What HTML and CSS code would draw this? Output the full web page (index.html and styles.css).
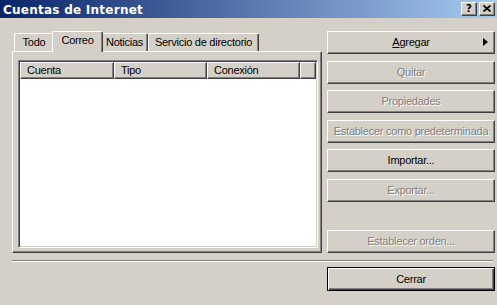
FILE: index.html
```html
<!DOCTYPE html>
<html lang="es">
<head>
<meta charset="utf-8">
<title>Cuentas de Internet</title>
<link rel="stylesheet" href="styles.css">
</head>
<body>
<div class="window">
  <div class="titlebar">
    <span class="title">Cuentas de Internet</span>
    <div class="caption-btns">
      <span class="cap-btn help">?</span>
      <span class="cap-btn close">
        <svg width="8" height="7" viewBox="0 0 8 7"><path d="M0.5 0.5 L7.5 6.5 M7.5 0.5 L0.5 6.5" stroke="#000" stroke-width="1.7" fill="none"/></svg>
      </span>
    </div>
  </div>
  <div class="client">
    <div class="main">
      <div class="tabarea">
        <div class="tabstrip">
          <div class="tab t-todo">Todo</div>
          <div class="tab sel t-correo">Correo</div>
          <div class="tab t-noticias">Noticias</div>
          <div class="tab t-servicio">Servicio de directorio</div>
        </div>
        <div class="panel">
          <div class="listview">
            <div class="lv-header">
              <div class="col c1">Cuenta</div>
              <div class="col c2">Tipo</div>
              <div class="col c3">Conexión</div>
              <div class="col c4"></div>
            </div>
          </div>
        </div>
      </div>
      <div class="buttons">
        <div class="btn menu"><span></span><span class="label"><u>A</u>gregar</span><span class="arrow"></span></div>
        <div class="btn disabled">Quitar</div>
        <div class="btn disabled">Propiedades</div>
        <div class="btn disabled">Establecer como predeterminada</div>
        <div class="btn">Importar...</div>
        <div class="btn disabled">Exportar...</div>
        <div class="btn disabled order">Establecer orden...</div>
      </div>
    </div>
    <div class="separator"></div>
    <div class="footer">
      <div class="btn default">Cerrar</div>
    </div>
  </div>
</div>
</body>
</html>
```
FILE: styles.css
```css
* { box-sizing: border-box; }

html, body {
  margin: 0;
  padding: 0;
}

body {
  width: 497px;
  height: 305px;
  overflow: hidden;
  background: #d4d0c8;
  font-family: "Liberation Sans", Arial, sans-serif;
  font-size: 11px;
  letter-spacing: -0.25px;
  color: #000;
}

.window {
  width: 497px;
  height: 305px;
  background: #d4d0c8;
}

/* ---------- title bar ---------- */
.titlebar {
  height: 18px;
  display: flex;
  justify-content: space-between;
  align-items: flex-start;
  background: linear-gradient(to right, #0a246a, #a6caf0);
  padding-right: 2px;
}

.title {
  font-family: "DejaVu Sans", Verdana, sans-serif;
  font-weight: bold;
  font-size: 12px;
  line-height: 18px;
  padding-top: 1px;
  padding-left: 3px;
  color: #fff;
  letter-spacing: 0.25px;
  white-space: nowrap;
}

.caption-btns {
  display: flex;
  gap: 2px;
  margin-top: 2px;
}

.cap-btn {
  width: 16px;
  height: 14px;
  background: #d4d0c8;
  border-top: 1px solid #fff;
  border-left: 1px solid #fff;
  border-right: 1px solid #404040;
  border-bottom: 1px solid #404040;
  box-shadow: inset -1px -1px 0 #808080;
  display: flex;
  align-items: center;
  justify-content: center;
}

.cap-btn.help {
  font-family: "DejaVu Sans", Verdana, sans-serif;
  font-weight: bold;
  font-size: 10px;
  letter-spacing: 0;
  line-height: 1;
  padding-bottom: 1px;
}

.cap-btn svg {
  display: block;
  margin-top: -1px;
}

/* ---------- client ---------- */
.client {
  padding: 13px 2px 0 12px;
}

.main {
  display: flex;
  gap: 5px;
}

.tabarea {
  width: 310px;
  display: flex;
  flex-direction: column;
}

.tabstrip {
  height: 20px;
  display: flex;
  align-items: flex-end;
  padding-left: 2px;
}

.tab {
  height: 18px;
  background: #d4d0c8;
  border-top: 1px solid #fff;
  border-left: 1px solid #fff;
  border-right: 1px solid #404040;
  box-shadow: inset -1px 0 0 #808080;
  border-radius: 2px 2px 0 0;
  display: flex;
  align-items: center;
  justify-content: center;
  padding-bottom: 1px;
  white-space: nowrap;
}

.t-todo { width: 40px; }
.t-correo { width: 51px; }
.t-noticias { width: 47px; }
.t-servicio { width: 111px; }

.tab.sel {
  height: 21px;
  margin: 0 -2px -1px;
  position: relative;
  z-index: 2;
  padding-bottom: 4px;
}

.panel {
  height: 202px;
  border-top: 1px solid #fff;
  border-left: 1px solid #fff;
  border-right: 1px solid #404040;
  border-bottom: 1px solid #404040;
  box-shadow: inset -1px -1px 0 #808080;
  padding: 8px 0 0 5px;
}

.listview {
  width: 300px;
  height: 188px;
  background: #fff;
  border-top: 1px solid #808080;
  border-left: 1px solid #808080;
  border-right: 1px solid #fff;
  border-bottom: 1px solid #fff;
  box-shadow: inset 1px 1px 0 #404040, inset -1px -1px 0 #d4d0c8;
  padding: 1px;
}

.lv-header {
  display: flex;
  height: 17px;
}

.col {
  height: 17px;
  background: #d4d0c8;
  border-top: 1px solid #fff;
  border-left: 1px solid #fff;
  border-right: 1px solid #404040;
  border-bottom: 1px solid #404040;
  box-shadow: inset -1px -1px 0 #808080;
  padding-left: 6px;
  line-height: 14px;
  white-space: nowrap;
}

.c1 { width: 94px; }
.c2 { width: 93px; }
.c3 { width: 93px; }
.c4 { flex: 1; }

/* ---------- buttons ---------- */
.buttons {
  width: 168px;
  display: flex;
  flex-direction: column;
  gap: 6.6px;
}

.btn {
  height: 23px;
  background: #d4d0c8;
  border-top: 1px solid #fff;
  border-left: 1px solid #fff;
  border-right: 1px solid #404040;
  border-bottom: 1px solid #404040;
  box-shadow: inset -1px -1px 0 #808080;
  display: flex;
  align-items: center;
  justify-content: center;
  white-space: nowrap;
  padding-bottom: 1px;
}

.btn.disabled {
  color: #808080;
  text-shadow: 1px 1px 0 #fff;
}

.btn.menu {
  display: grid;
  grid-template-columns: 1fr auto 1fr;
  align-items: center;
}

.btn.menu .arrow {
  justify-self: end;
  margin-right: 6px;
  width: 0;
  height: 0;
  border-left: 5px solid #000;
  border-top: 4.5px solid transparent;
  border-bottom: 4.5px solid transparent;
}

.btn.order {
  margin-top: auto;
}

.separator {
  width: 481px;
  height: 2px;
  margin-top: 7px;
  border-top: 1px solid #808080;
  border-bottom: 1px solid #fff;
}

.footer {
  display: flex;
  justify-content: flex-end;
  margin-top: 5px;
}

.btn.default {
  width: 168px;
  height: 24px;
  border: 1px solid #000;
  box-shadow: inset 1px 1px 0 #fff, inset -1px -1px 0 #404040, inset -2px -2px 0 #808080;
}
```
